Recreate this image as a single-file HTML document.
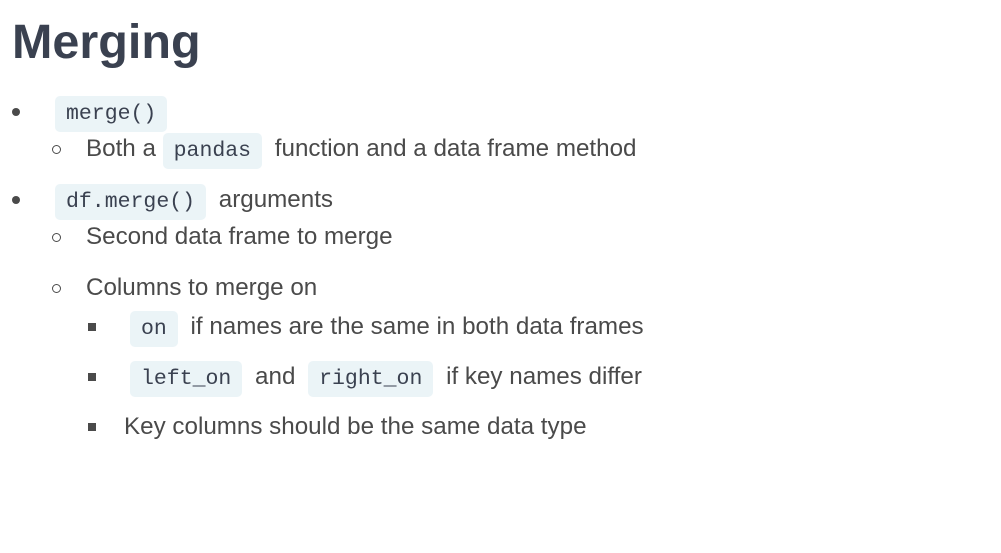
<!DOCTYPE html><html><head><style>
body{margin:0;width:1001px;height:553px;background:#fff;position:relative;overflow:hidden;font-family:"Liberation Sans",sans-serif;color:#4a4a4a}
h1{position:absolute;left:12px;top:10px;margin:0;font-size:48.5px;font-weight:bold;color:#3a4150;line-height:64px}
.r{position:absolute;height:34px;line-height:34px;font-size:24.2px;white-space:nowrap}
code{font-family:"Liberation Mono",monospace;font-size:21.5px;background:#ebf4f7;border-radius:5px;padding:6px 11px;margin:0 6px;color:#3a4150}
.r code:first-child{margin-left:0}
.b{position:absolute;}
.d{width:8px;height:8px;border-radius:50%;background:#4a4a4a}
.c{width:7px;height:7px;border-radius:50%;border:1.5px solid #4a4a4a}
.s{width:8px;height:8px;background:#4a4a4a}
</style></head><body>
<h1>Merging</h1>
<div class="b d" style="left:12px;top:108px"></div>
<div class="r" style="left:55px;top:95px"><code>merge()</code></div>
<div class="b c" style="left:52px;top:145px"></div>
<div class="r" style="left:86px;top:132px">Both a <code>pandas</code> function and a data frame method</div>
<div class="b d" style="left:12px;top:196px"></div>
<div class="r" style="left:55px;top:183px"><code>df.merge()</code> arguments</div>
<div class="b c" style="left:52px;top:233px"></div>
<div class="r" style="left:86px;top:220px">Second data frame to merge</div>
<div class="b c" style="left:52px;top:284px"></div>
<div class="r" style="left:86px;top:271px">Columns to merge on</div>
<div class="b s" style="left:88px;top:323px"></div>
<div class="r" style="left:130px;top:310px"><code>on</code> if names are the same in both data frames</div>
<div class="b s" style="left:88px;top:373px"></div>
<div class="r" style="left:130px;top:360px"><code>left_on</code> and <code>right_on</code> if key names differ</div>
<div class="b s" style="left:88px;top:423px"></div>
<div class="r" style="left:124px;top:410px">Key columns should be the same data type</div>
</body></html>
